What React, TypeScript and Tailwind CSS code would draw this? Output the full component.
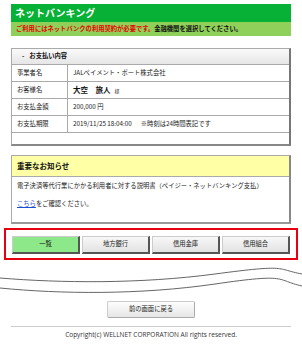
const rows: { label: string; value: React.ReactNode }[] = [
  { label: "事業者名", value: "JALペイメント・ポート株式会社" },
  {
    label: "お客様名",
    value: (
      <span>
        <span className="text-[7.5px] font-bold text-[#111]">大空　旅人</span>
        <span className="ml-[4px] text-[5px]">様</span>
      </span>
    ),
  },
  { label: "お支払金額", value: "200,000 円" },
  {
    label: "お支払期限",
    value: (
      <span>
        2019/11/25 18:04:00<span className="ml-[9px]">※時刻は24時間表記です</span>
      </span>
    ),
  },
];

const tabs = ["一覧", "地方銀行", "信用金庫", "信用組合"];

const App = () => {
  return (
    <div className="w-[302px] h-[346px] bg-white overflow-hidden text-[#222] font-['Noto_Sans_CJK_JP','Noto_Sans',sans-serif]">
      <div className="mx-[11px] pt-[4px]">
        <div className="h-[18px] bg-[#06b135] flex items-center pl-[4px] text-white font-bold text-[10px] leading-none">
          ネットバンキング
        </div>
        <div className="h-[14px] bg-[#8fd05a] flex items-center pl-[5px] font-bold text-[6.3px] leading-none">
          <span className="text-[#e60000]">ご利用にはネットバンクの利用契約が必要です。</span>
          <span className="text-[#111]">金融機関を選択してください。</span>
        </div>

        <div className="mt-[12px] border border-[#aaa] border-r-2 border-b-2 border-r-[#777] border-b-[#888]">
          <div className="h-[15px] flex items-center pl-[10px] bg-gradient-to-b from-[#fafafa] to-[#e6e6e6] font-bold text-[6.3px] leading-none text-[#111]">
            <span className="mr-[5px]">-</span>お支払い内容
          </div>
          {rows.map((r) => (
            <div
              key={r.label}
              className="grid grid-cols-[56px_1fr] h-[17px] border-t border-[#aaa] text-[6.3px] leading-none"
            >
              <div className="flex items-center pl-[5px] border-r border-[#aaa]">{r.label}</div>
              <div className="flex items-center pl-[5px]">{r.value}</div>
            </div>
          ))}
          <div className="h-[12px] border-t border-[#aaa]" />
        </div>

        <div className="mt-[9px] border border-[#aaa] border-r-2 border-b-2 border-r-[#888] border-b-[#999]">
          <div className="h-[21px] bg-[#ffffa6] border-b border-[#aaa] flex items-center pl-[5px] font-bold text-[7.5px] leading-none text-[#111]">
            重要なお知らせ
          </div>
          <div className="h-[45px] px-[5px] pt-[6px] text-[6.3px] leading-none">
            <div>電子決済等代行業にかかる利用者に対する説明書（ペイジー・ネットバンキング支払）</div>
            <div className="mt-[12px]">
              <span className="text-[#1a4fd0] underline">こちら</span>をご確認ください。
            </div>
          </div>
        </div>
      </div>

      <div className="mx-[4px] mt-[4px] border-2 border-[#e60012] px-[6px] pt-[6px] pb-[4px]">
        <div className="grid grid-cols-4 gap-[2px]">
          {tabs.map((t, i) => (
            <div
              key={t}
              className={
                "h-[18px] flex items-center justify-center text-[6.3px] leading-none border border-[#ccc] border-r-2 border-b-2 border-r-[#555] border-b-[#555] " +
                (i === 0 ? "bg-[#8de88a] text-[#111]" : "bg-gradient-to-b from-[#f8f8f8] to-[#e2e2e2] text-[#222]")
              }
            >
              {t}
            </div>
          ))}
        </div>
      </div>

      <svg width="302" height="34" viewBox="0 0 302 34" className="block mt-[4px]">
        <path d="M0 14 C 60 19, 140 20, 215 10 S 275 5, 302 10" fill="none" stroke="#666" strokeWidth="1" />
        <path d="M0 24 C 60 30, 140 31, 215 20 S 275 16, 302 22" fill="none" stroke="#666" strokeWidth="1" />
      </svg>

      <div className="flex justify-center mt-[3px]">
        <div className="w-[88px] h-[17px] flex items-center justify-center border border-[#ccc] border-r-[#aaa] border-b-[#aaa] rounded-[2px] bg-gradient-to-b from-[#fdfdfd] to-[#e6e6e6] text-[6.3px] leading-none">
          前の画面に戻る
        </div>
      </div>

      <div className="mx-[11px] mt-[8px] border-t border-[#ccc]" />
      <div className="mt-[5px] text-center text-[6.5px] leading-none text-[#333] font-['Open_Sans',sans-serif]">
        Copyright(c) WELLNET CORPORATION All rights reserved.
      </div>
    </div>
  );
};

export default App;
